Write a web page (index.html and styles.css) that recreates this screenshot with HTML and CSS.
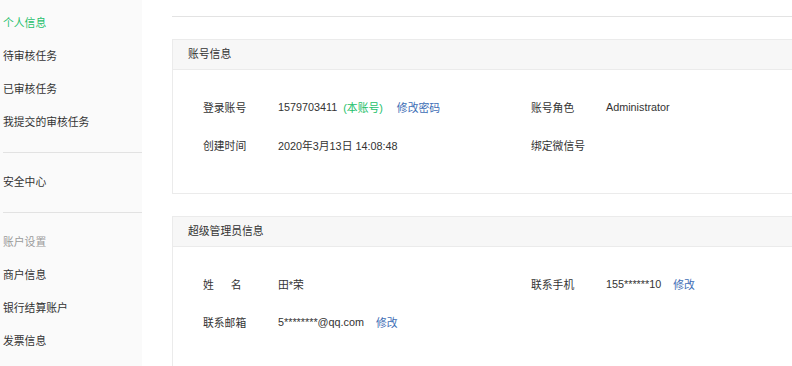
FILE: index.html
```html
<!DOCTYPE html>
<html lang="zh-CN">
<head>
<meta charset="utf-8">
<title>个人信息</title>
<link rel="stylesheet" href="styles.css">
</head>
<body>
<div class="page">
  <aside class="sidebar">
    <div class="nav-item active">个人信息</div>
    <div class="nav-item">待审核任务</div>
    <div class="nav-item">已审核任务</div>
    <div class="nav-item">我提交的审核任务</div>
    <div class="divider"></div>
    <div class="nav-item">安全中心</div>
    <div class="divider"></div>
    <div class="nav-item group">账户设置</div>
    <div class="nav-item">商户信息</div>
    <div class="nav-item">银行结算账户</div>
    <div class="nav-item">发票信息</div>
  </aside>
  <main class="main">
    <div class="topbar"></div>
    <section class="card">
      <div class="card-head">账号信息</div>
      <div class="card-body">
        <div class="row">
          <div class="field">
            <span class="label">登录账号</span>
            <span class="value">1579703411</span>
            <span class="tag">(本账号)</span>
            <a class="link">修改密码</a>
          </div>
          <div class="field">
            <span class="label">账号角色</span>
            <span class="value">Administrator</span>
          </div>
        </div>
        <div class="row">
          <div class="field">
            <span class="label">创建时间</span>
            <span class="value">2020年3月13日 14:08:48</span>
          </div>
          <div class="field">
            <span class="label">绑定微信号</span>
            <span class="value"></span>
          </div>
        </div>
      </div>
    </section>
    <section class="card">
      <div class="card-head">超级管理员信息</div>
      <div class="card-body">
        <div class="row">
          <div class="field">
            <span class="label">姓<span class="gap"></span>名</span>
            <span class="value">田*荣</span>
          </div>
          <div class="field">
            <span class="label">联系手机</span>
            <span class="value">155******10</span>
            <a class="link">修改</a>
          </div>
        </div>
        <div class="row">
          <div class="field">
            <span class="label">联系邮箱</span>
            <span class="value">5********@qq.com</span>
            <a class="link">修改</a>
          </div>
        </div>
      </div>
    </section>
  </main>
</div>
</body>
</html>
```
FILE: styles.css
```css
html, body {
  margin: 0;
  padding: 0;
  background: #ffffff;
}
body {
  font-family: "Liberation Sans", "Noto Sans CJK SC", sans-serif;
  font-size: 10.8px;
  color: #333333;
}
.page {
  display: flex;
  height: 366px;
  overflow: hidden;
}
.sidebar {
  flex: none;
  width: 139px;
  padding: 7px 0 0 3px;
  background: #fafafa;
}
.nav-item {
  height: 33px;
  line-height: 33px;
  white-space: nowrap;
  color: #333333;
}
.nav-item.active {
  color: #1dbf6a;
}
.nav-item.group {
  color: #9a9a9a;
}
.divider {
  height: 1px;
  background: #e2e2e2;
  margin: 13px 0 13px;
}
.main {
  flex: 1;
  min-width: 0;
  padding-left: 30px;
}
.topbar {
  height: 16px;
  border-bottom: 1px solid #e3e3e3;
  margin-bottom: 22px;
}
.card {
  border: 1px solid #ebebeb;
  border-right: 0;
  margin-bottom: 22px;
}
.card-head {
  height: 29px;
  line-height: 29px;
  padding-left: 15px;
  background: #f7f7f7;
  border-bottom: 1px solid #ebebeb;
}
.card-body {
  padding: 18px 30px 29px;
}
.row {
  display: flex;
  height: 38px;
  align-items: center;
}
.field {
  display: flex;
  align-items: center;
  width: 328px;
  flex: none;
  white-space: nowrap;
}
.label {
  width: 75px;
  flex: none;
}
.gap {
  display: inline-block;
  width: 17px;
}
.tag {
  color: #1dbf6a;
  margin-left: 6px;
}
.link {
  color: #3d6db5;
  margin-left: 12px;
  cursor: pointer;
}
.tag + .link {
  margin-left: 14px;
}
```
